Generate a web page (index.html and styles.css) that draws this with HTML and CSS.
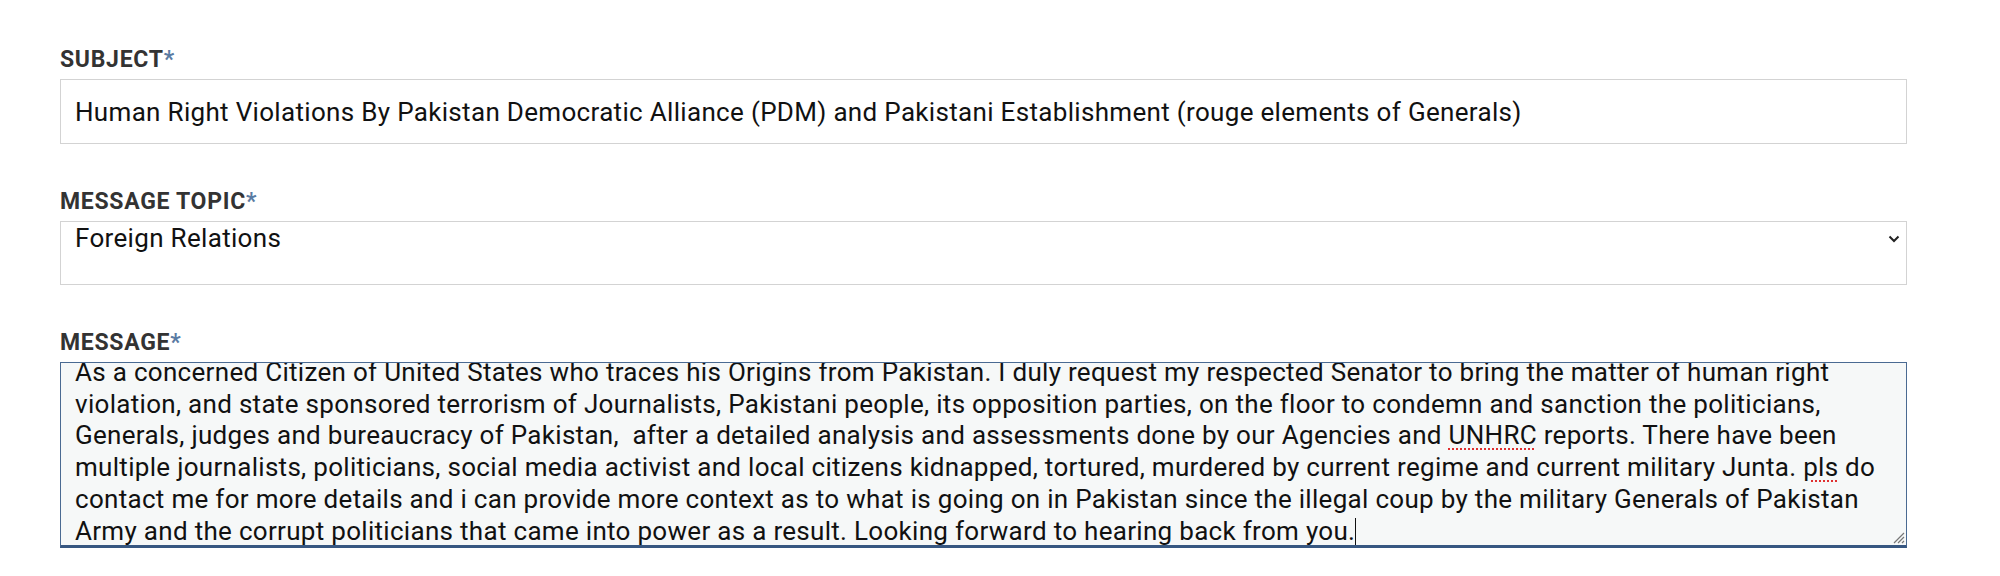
FILE: index.html
```html
<!DOCTYPE html>
<html lang="en">
<head>
<meta charset="utf-8">
<title>Contact form</title>
<link rel="stylesheet" href="styles.css">
</head>
<body>
<form class="form">
  <div class="field field-first">
    <label class="label">SUBJECT<span class="req">*</span></label>
    <div class="input">Human Right Violations By Pakistan Democratic Alliance (PDM) and Pakistani Establishment (rouge elements of Generals)</div>
  </div>
  <div class="field">
    <label class="label">MESSAGE TOPIC<span class="req">*</span></label>
    <div class="select">
      <span class="select-value">Foreign Relations</span>
      <svg class="chevron" width="12" height="8" viewBox="0 0 12 8"><path d="M1.5 1.5 L6 6 L10.5 1.5" fill="none" stroke="#222" stroke-width="2"/></svg>
    </div>
  </div>
  <div class="field">
    <label class="label">MESSAGE<span class="req">*</span></label>
    <div class="textarea">
      <div class="textarea-content">
        <div class="line">As a concerned Citizen of United States who traces his Origins from Pakistan. I duly request my respected Senator to bring the matter of human right</div>
        <div class="line">violation, and state sponsored terrorism of Journalists, Pakistani people, its opposition parties, on the floor to condemn and sanction the politicians,</div>
        <div class="line">Generals, judges and bureaucracy of Pakistan,&nbsp; after a detailed analysis and assessments done by our Agencies and <span class="spell">UNHRC</span> reports. There have been</div>
        <div class="line">multiple journalists, politicians, social media activist and local citizens kidnapped, tortured, murdered by current regime and current military Junta. <span class="spell">pls</span> do</div>
        <div class="line">contact me for more details and i can provide more context as to what is going on in Pakistan since the illegal coup by the military Generals of Pakistan</div>
        <div class="line">Army and the corrupt politicians that came into power as a result. Looking forward to hearing back from you.<span class="caret"></span></div>
      </div>
      <svg class="resize" width="14" height="14" viewBox="0 0 14 14"><path d="M13 3 L3 13 M13 7 L7 13 M13 11 L11 13" stroke="#777" stroke-width="1.2" fill="none"/></svg>
    </div>
  </div>
</form>
</body>
</html>
```
FILE: styles.css
```css
html, body {
  margin: 0;
  padding: 0;
  background: #ffffff;
}
.form {
  display: flex;
  flex-direction: column;
  width: 1847px;
  padding: 0 0 0 60px;
  font-family: Roboto, "Liberation Sans", sans-serif;
}
.field {
  display: flex;
  flex-direction: column;
  margin-top: 46px;
}
.field-first {
  margin-top: 48px;
}
.label {
  font-size: 23px;
  line-height: 24px;
  font-weight: 700;
  letter-spacing: 0.7px;
  color: #333333;
  margin-bottom: 7px;
}
.req {
  color: #5a7ba3;
}
.input {
  box-sizing: border-box;
  height: 65px;
  border: 1.5px solid #d3d3d3;
  display: flex;
  align-items: center;
  padding: 0 14px;
  font-size: 26px;
  letter-spacing: 0.32px;
  color: #111111;
  white-space: nowrap;
}
.select {
  box-sizing: border-box;
  height: 64px;
  border: 1.5px solid #d3d3d3;
  display: flex;
  align-items: flex-start;
  justify-content: space-between;
  padding: 1px 6px 0 14px;
  font-size: 26px;
  letter-spacing: 0.32px;
  line-height: 30px;
  color: #111111;
}
.chevron {
  margin-top: 12px;
}
.textarea {
  position: relative;
  box-sizing: border-box;
  height: 186px;
  border: 1px solid #4a6a92;
  border-bottom: 3px solid #375781;
  background: #f6f8f8;
  overflow: hidden;
  padding: 0 14px;
}
.textarea-content {
  margin-top: -6px;
  font-size: 26px;
  letter-spacing: 0.3px;
  line-height: 31.7px;
  color: #111111;
}
.line {
  white-space: nowrap;
}
.spell {
  text-decoration: underline dotted #e03030;
  text-decoration-thickness: 2px;
  text-underline-offset: 4px;
}
.caret {
  display: inline-block;
  width: 0;
  height: 28px;
  border-left: 1.5px solid #111;
  vertical-align: -6px;
}
.resize {
  position: absolute;
  right: 1px;
  bottom: 1px;
}
```
